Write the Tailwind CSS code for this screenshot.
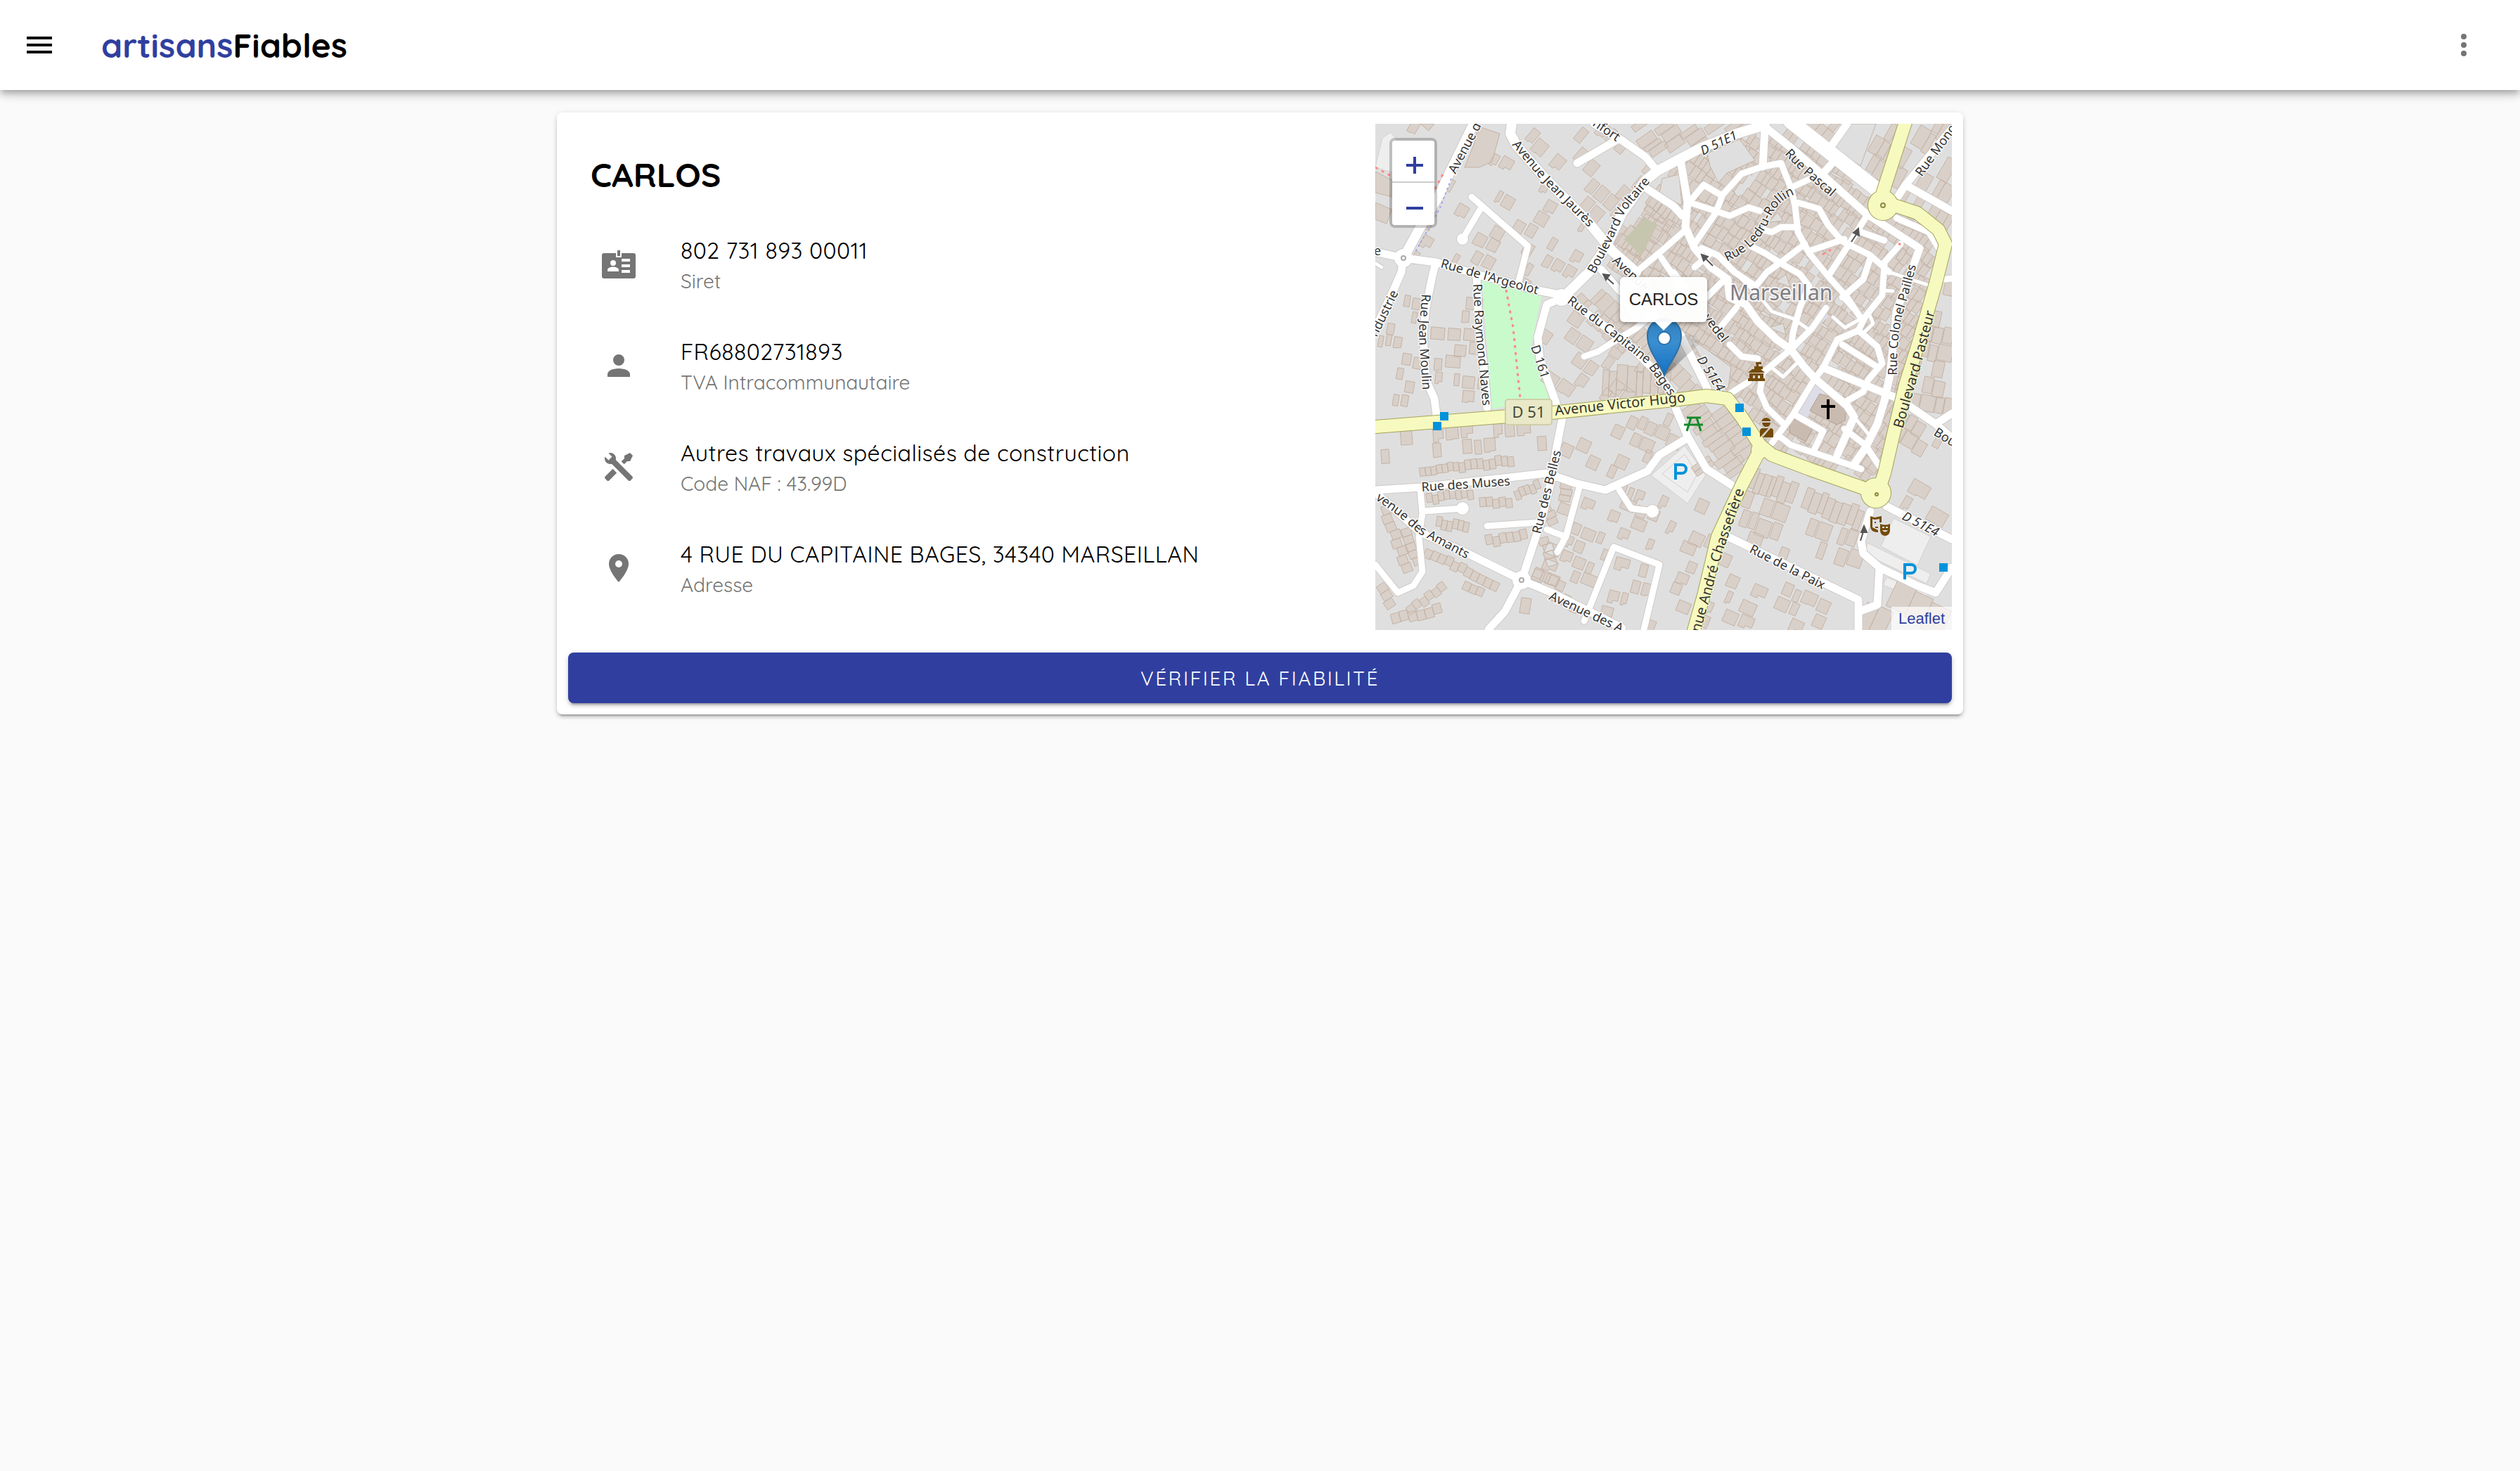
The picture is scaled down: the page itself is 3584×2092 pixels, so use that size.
<!DOCTYPE html>
<html lang="fr">
<head>
<meta charset="utf-8">
<meta name="viewport" content="width=device-width, initial-scale=1">
<title>artisansFiables - CARLOS</title>
<script src="https://cdn.jsdelivr.net/npm/@tailwindcss/browser@4"></script>
</head>
<body class="min-h-screen bg-[#fafafa] font-['Quicksand',Lato,sans-serif] text-black">

<header class="relative z-10 flex h-32 items-center bg-white pr-14 pl-8 shadow-[0_4px_8px_-2px_rgba(0,0,0,0.2),0_8px_10px_0_rgba(0,0,0,0.14),0_2px_20px_0_rgba(0,0,0,0.12)]">
  <button type="button" aria-label="Menu" class="size-12">
    <svg viewBox="0 0 24 24" class="size-12"><path d="M3 18h18v-2H3v2zm0-5h18v-2H3v2zm0-7v2h18V6H3z"/></svg>
  </button>
  <a href="#" class="ml-16 text-5xl font-bold"><span class="text-[#303f9f]">artisans</span>Fiables</a>
  <button type="button" aria-label="Plus d'options" class="ml-auto size-12 text-[#757575]">
    <svg viewBox="0 0 24 24" class="size-12" fill="currentColor"><circle cx="12" cy="6" r="2"/><circle cx="12" cy="12" r="2"/><circle cx="12" cy="18" r="2"/></svg>
  </button>
</header>

<main class="px-8 pt-8">
  <article class="mx-auto w-full max-w-[2000px] rounded-lg bg-white p-4 shadow-[0_6px_2px_-4px_rgba(0,0,0,0.2),0_4px_4px_0_rgba(0,0,0,0.14),0_2px_10px_0_rgba(0,0,0,0.12)]">
    <div class="grid grid-cols-12">
      <section class="col-span-7">
        <h1 class="flex h-32 items-center px-8 pt-4 text-5xl font-bold">CARLOS</h1>
        <ul class="text-[#757575]">
          <li class="flex h-36 items-center gap-16 px-12">
            <svg viewBox="0 0 24 24" class="size-12" fill="currentColor"><path fill-rule="evenodd" d="M11 2h2v4h-2zM1.500 4H10v3h4V4h8.500A1.500 1.500 0 0 1 24 5.500v15a1.500 1.500 0 0 1-1.500 1.500h-21A1.500 1.500 0 0 1 0 20.500v-15A1.500 1.500 0 0 1 1.500 4zM14 8v2h6V8zm0 4v2h6v-2zm0 4v2h6v-2zM8 9a2 2 0 1 0 0 4 2 2 0 0 0 0-4zm-4 8h8v-1c0-1.300-2-2.200-4-2.200s-4 .9-4 2.200z"/></svg>
            <div class="flex flex-col gap-1 pt-1"><p class="text-[32px] leading-10 tracking-[0.015em] text-black">802 731 893 00011</p><p class="text-[28px] leading-10">Siret</p></div>
          </li>
          <li class="flex h-36 items-center gap-16 px-12">
            <svg viewBox="0 0 24 24" class="size-12" fill="currentColor"><path d="M12 4a4 4 0 1 1 0 8 4 4 0 0 1 0-8m0 10c4.420 0 8 1.790 8 4v2H4v-2c0-2.210 3.580-4 8-4z"/></svg>
            <div class="flex flex-col gap-1 pt-1"><p class="text-[32px] leading-10 tracking-[0.015em] text-black">FR68802731893</p><p class="text-[28px] leading-10">TVA Intracommunautaire</p></div>
          </li>
          <li class="flex h-36 items-center gap-16 px-12">
            <svg viewBox="0 0 24 24" class="size-12" fill="currentColor"><path d="M21.710 20.290L20.290 21.710A1 1 0 0 1 18.880 21.710L7 9.850A3.810 3.810 0 0 1 6 10A4 4 0 0 1 2.220 4.700L4.760 7.240L5.290 6.710L6.710 5.290L7.240 4.760L4.700 2.220A4 4 0 0 1 10 6A3.810 3.810 0 0 1 9.850 7L21.710 18.880A1 1 0 0 1 21.710 20.290M2.290 18.880A1 1 0 0 0 2.290 20.290L3.710 21.710A1 1 0 0 0 5.120 21.710L10.590 16.250L7.760 13.420M20 2L16 4V6L13.830 8.170L15.830 10.170L18 8H20L22 4Z"/></svg>
            <div class="flex flex-col gap-1 pt-1"><p class="text-[32px] leading-10 tracking-[0.015em] text-black">Autres travaux spécialisés de construction</p><p class="text-[28px] leading-10">Code NAF : 43.99D</p></div>
          </li>
          <li class="flex h-36 items-center gap-16 px-12">
            <svg viewBox="0 0 24 24" class="size-12" fill="currentColor"><path d="M12 11.500A2.500 2.500 0 0 1 9.500 9 2.500 2.500 0 0 1 12 6.500 2.500 2.500 0 0 1 14.500 9 2.500 2.500 0 0 1 12 11.500M12 2a7 7 0 0 0-7 7c0 5.250 7 13 7 13s7-7.750 7-13a7 7 0 0 0-7-7z"/></svg>
            <div class="flex flex-col gap-1 pt-1"><p class="text-[32px] leading-10 tracking-[0.015em] text-black">4 RUE DU CAPITAINE BAGES, 34340 MARSEILLAN</p><p class="text-[28px] leading-10">Adresse</p></div>
          </li>
        </ul>
      </section>

      <section aria-label="Carte" class="relative col-span-5 h-[720px] overflow-hidden bg-[#e0dfdf] font-['Liberation_Sans',Arial,sans-serif]">
        <svg viewBox="0 0 820 720" preserveAspectRatio="xMidYMid slice" class="block h-full w-full" role="img" aria-label="Plan de Marseillan">
          <defs>
            <linearGradient id="pin" x1="0" y1="0" x2="0" y2="1"><stop offset="0" stop-color="#2e7cb8"/><stop offset=".4" stop-color="#3b8fd0"/><stop offset="1" stop-color="#1470c4"/></linearGradient>
            <linearGradient id="shade" x1="0" y1="1" x2="1" y2="0"><stop offset="0" stop-color="#000" stop-opacity=".6"/><stop offset="1" stop-color="#000" stop-opacity="0"/></linearGradient>
            <path id="l1" d="M194 30L236 80L312 156"/>
            <path id="l2" d="M312 214L332 176L356 124L396 76"/>
            <path id="l3" d="M92 204L144 219L246 247"/>
            <path id="l4" d="M139 228L143 300L154 414"/>
            <path id="l5" d="M66 242L62 300L68 390"/>
            <path id="l6" d="M272 254L328 296L386 342L432 408"/>
            <path id="l7" d="M582 43L606 68L664 118"/>
            <path id="l8" d="M500 196Q545 176 560 138T612 98"/>
            <path id="l9" d="M742 358Q741 300 752 264T774 182"/>
            <path id="l10" d="M750 434L773 354L802 245"/>
            <path id="l11" d="M0 534L32 557L62 583L136 622"/>
            <path id="l12" d="M462 724L493 612L534 495"/>
          </defs>
          <rect width="820" height="720" fill="#dfdfdf"/>
          <g fill="#eee" stroke="#d4d0ce">
            <path d="M10 20L22 12 40 34 26 70 0 62ZM0 68L24 80V100L0 96Z"/>
            <path d="M392 500L440 458 470 500 444 540Z"/><path d="M408 498L440 470 458 498 444 524Z"/>
            <path d="M737 561L790 587 771 628 719 601Z"/><path d="M700 596L790 640 784 654 696 612ZM727 645L786 668 782 680 722 656Z"/>
          </g>
          <path d="M151 221L237 241 231 271 222 317 237 361 247 391 166 406Z" fill="#c8facc"/>
          <g id="buildings" fill="#d9d0c9" stroke="#c4b3a6" stroke-width="1"></g>
          <path d="M384 134L401 144 384 177 377 187 354 164Z" fill="#c6c6ae"/>
          <g fill="#dddde8"><path d="M624 366L640 382 614 418 598 412ZM637 266L646 274 628 288Z"/></g>
          <path d="M632 384L652 390 670 402 668 422 656 428 618 408ZM588 424L600 420 622 434 612 452 590 440Z" fill="#c9bbb0" stroke="#b3a090"/>
          <g id="roads" fill="none" stroke-linecap="round" stroke-linejoin="round"></g>
          <g fill="none" stroke="#ff8a8a" stroke-width="3" stroke-dasharray="4 6"><path d="M186 236L196 290 206 390"/><path d="M96 72L84 94M0 62L22 74M230 0M636 186L650 178M744 170L750 174"/></g>
          <path d="M108 78L92 120 56 184" fill="none" stroke="#a5a5f5" stroke-width="2" stroke-dasharray="3 4"/>
          <g fill="none" stroke="#aaa" stroke-width="2"><circle cx="40" cy="191" r="3"/><circle cx="208" cy="649" r="3"/></g>
          <g fill="none" stroke="#8a8a40" stroke-width="2"><circle cx="722" cy="116" r="3"/><circle cx="713" cy="527" r="2"/></g>
          <g fill="#555" stroke="#555" stroke-width="2">
            <path d="M324 214L333 215 328 222ZM328 218L339 228"/><path d="M464 186L473 189 467 195ZM469 191L480 202"/>
            <path d="M687 149L688 159 680 155ZM685 156L677 168"/><path d="M695 572L699 581 691 581ZM694 580L690 593"/>
          </g>
          <g fill="#333" stroke="#fff" stroke-opacity=".75" stroke-width="3" paint-order="stroke" font-family="'Noto Sans',sans-serif" font-size="18">
            <text><textPath href="#l1">Avenue Jean Jaurès</textPath></text>
            <text><textPath href="#l2">Boulevard Voltaire</textPath></text>
            <text><textPath href="#l3">Rue de l'Argeolot</textPath></text>
            <text><textPath href="#l4">Rue Raymond Naves</textPath></text>
            <text><textPath href="#l5">Rue Jean Moulin</textPath></text>
            <text><textPath href="#l6">Rue du Capitaine Bages</textPath></text>
            <text><textPath href="#l7">Rue Pascal</textPath></text>
            <text><textPath href="#l8">Rue Ledru-Rollin</textPath></text>
            <text><textPath href="#l9">Rue Colonel Pailles</textPath></text>
            <text><textPath href="#l11">venue des Amants</textPath></text>
            <text transform="translate(114 72) rotate(-62)">Avenue d</text>
            <text transform="translate(308 2) rotate(34)">nfort</text>
            <text transform="translate(336 196) rotate(43)">Avenue</text>
            <text transform="translate(2 304) rotate(-64)">ndustrie</text>
            <text x="-2" y="187">e</text>
            <text transform="translate(221 317) rotate(72)">D 161</text>
            <text transform="translate(466 45) rotate(-26)" font-style="italic">D 51E1</text>
            <text transform="translate(777 76) rotate(-54)">Rue Mono</text>
            <text transform="translate(466 276) rotate(53)">vedel</text>
            <text transform="translate(457 335) rotate(57)" font-style="italic">D 51E4</text>
            <text transform="translate(793 442) rotate(32)">Boul</text>
            <text transform="translate(66 523) rotate(-4)">Rue des Muses</text>
            <text transform="translate(235 584) rotate(-76)">Rue des Belles</text>
            <text transform="translate(246 676) rotate(25)">Avenue des A</text>
            <text transform="translate(531 609) rotate(27)">Rue de la Paix</text>
            <text transform="translate(748 562) rotate(27)" font-style="italic">D 51E4</text>
            <g stroke="#f7fabf" font-size="20">
              <text><textPath href="#l10">Boulevard Pasteur</textPath></text>
              <text><textPath href="#l12">nue André Chassefière</textPath></text>
              <text transform="translate(256 415) rotate(-6)">Avenue Victor Hugo</text>
            </g>
            <text x="504" y="251" font-size="30" fill="#7d7d85" stroke-width="4">Marseillan</text>
          </g>
          <rect x="185" y="392" width="66" height="36" rx="4" fill="#e9e9c8" stroke="#cfcfa6" stroke-width="2"/>
          <text x="218" y="418" text-anchor="middle" font-family="'Noto Sans',sans-serif" font-size="22" fill="#4a4a35">D 51</text>
          <g fill="#0092da"><path d="M92 410h12v12H92zM82 424h12v12H82zM512 398h12v12h-12zM522 432h12v12h-12zM802 625h12v12h-12z"/></g>
          <g fill="none" stroke="#0092da" stroke-width="4"><path d="M427 506V485h9a6 6 0 0 1 0 12h-9M753 648V627h9a6 6 0 0 1 0 12h-9"/></g>
          <g fill="#734a08">
            <path d="M541 339h8v3h-4v3h6v4h-12v-4h3zM530 354l6-5h12l6 5zM532 355h20v7h2v4h-24v-4h2zM537 358v4h3v-4zM544 358v4h3v-4z" fill-rule="evenodd"/>
            <path d="M550 421q6-6 12 0v2h-12zM550 425h12q-1 6-6 6t-6-6zM547 446v-9q0-4 4-4h8zM566 446v-9q0-4-4-4l-11 13z"/>
            <path d="M704 558l6 2 10-2v9h-3v-5l-7 1-3-1v12l8 4v3q-11 0-11-9zM710 566h2v2h-2zM711 573h4v2h-4zM718 569q7 3 14 0v10q-1 7-7 7t-7-7zm3 4v2h3v-2zm5 0v2h3v-2zm-5 5q4 5 8 0z" fill-rule="evenodd"/>
          </g>
          <path d="M642 392h4v8h8v4h-8v16h-4v-16h-8v-4h8z" fill="#000"/>
          <path d="M443 418h20M439 428h27M449 418l-6 19M457 418l6 19" stroke="#168a2a" stroke-width="3" fill="none"/>
          <path d="M411 359L462 312Q458 294 436 302Z" fill="url(#shade)" opacity=".7"/>
          <path d="M411 358C405 340 387 324 387 301a24 24 0 0 1 48 0C435 324 417 340 411 358Z" fill="url(#pin)" stroke="#2b6fa5" stroke-width="2"/>
          <circle cx="411" cy="305" r="9" fill="#fff" stroke="#2b73ad" stroke-width="2"/>
        </svg>

        <div class="absolute top-5 left-5 flex flex-col rounded-lg border-4 border-black/20 bg-clip-padding">
          <button type="button" aria-label="Zoom avant" class="grid h-[60px] w-15 place-items-center rounded-t-sm border-b-2 border-[#ccc] bg-white"><svg viewBox="0 0 24 24" class="mt-3 ml-1 size-6"><path d="M0 12h24M12 0v24" stroke="#303f9f" stroke-width="4"/></svg></button>
          <button type="button" aria-label="Zoom arrière" class="grid h-[60px] w-15 place-items-center rounded-b-sm bg-white"><svg viewBox="0 0 24 24" class="mt-3 ml-1 size-6"><path d="M0 12h24" stroke="#303f9f" stroke-width="4"/></svg></button>
        </div>
        <div role="tooltip" class="absolute top-[218px] left-1/2 flex h-16 w-[124px] -translate-x-1/2 items-center justify-center rounded-md bg-white/95 text-2xl text-[#222] shadow-[0_2px_6px_rgba(0,0,0,0.4)]">CARLOS
          <svg viewBox="0 0 24 12" class="absolute top-full h-3 w-6"><path d="M0 0h24L12 12z" fill="#fff"/></svg>
        </div>
        <div class="absolute right-0 bottom-0 bg-white/70 px-[10px] text-[22px] leading-[33px]"><a href="#" class="text-[#303f9f]">Leaflet</a></div>
      </section>
    </div>
    <button type="button" class="mt-8 h-18 w-full rounded-lg bg-[#303f9f] pt-0.5 text-[28px] tracking-[0.09em] text-white shadow-[0_6px_2px_-4px_rgba(0,0,0,0.2),0_4px_4px_0_rgba(0,0,0,0.14),0_2px_10px_0_rgba(0,0,0,0.12)]">VÉRIFIER LA FIABILITÉ</button>
  </article>
</main>

<script>
// Small seeded generator so that the plan is the same on every load.
let seed = 7;
const rnd = () => (seed = (seed * 16807) % 2147483647) / 2147483647;
const buildings = document.getElementById('buildings');
const roads = document.getElementById('roads');

function inside(x, y, p) {
  let c = false;
  for (let i = 0, j = p.length - 1; i < p.length; j = i++) {
    if ((p[i][1] > y) !== (p[j][1] > y) && x < (p[j][0] - p[i][0]) * (y - p[i][1]) / (p[j][1] - p[i][1]) + p[i][0]) c = !c;
  }
  return c;
}
const points = s => s.split(' ').map(q => q.split(',').map(Number));
let shapes = '';

// Party-wall blocks: [outline, angle, plot width, plot depth, share built, gap]
const blocks = [
  ['400,95 424,60 470,42 554,12 600,14 712,105 780,150 800,170 780,260 745,400 722,495 690,505 560,458 512,385 420,300 330,190', 34, 10, 17, .95, 0],
  ['0,0 190,0 194,28 300,140 300,205 265,240 40,185 130,20', 30, 17, 22, .27, 4],
  ['200,0 310,0 400,65 384,80 340,165 300,130', 40, 17, 24, .45, 3],
  ['340,0 554,0 404,56', 55, 12, 28, .8, 1],
  ['345,150 384,90 430,120 437,150 371,205 330,170', 35, 16, 30, .85, 0],
  ['590,0 660,0 640,30', 40, 12, 20, .85, 0],
  ['712,20 740,0 730,90 690,70', 30, 14, 26, .8, 0],
  ['760,0 820,0 760,70 735,80', 30, 14, 30, .8, 0],
  ['740,110 820,50 820,150 800,140', 30, 12, 34, .8, 0],
  ['800,240 820,220 820,430 745,380', 12, 16, 24, .75, 1],
  ['735,440 750,400 820,440 820,470 740,460', 30, 16, 22, .8, 1],
  ['85,205 140,218 155,400 88,400', 5, 20, 22, .55, 5],
  ['0,300 60,230 70,400 0,410', 10, 17, 20, .55, 4],
  ['245,260 300,262 420,372 420,390 258,395 236,320', 35, 18, 22, .4, 3],
  ['280,250 316,212 470,382 430,386', 45, 12, 24, .93, 0],
  ['324,352 420,346 424,384 322,392', 3, 11, 36, .93, 0],
  ['0,440 250,425 250,470 0,495', -4, 22, 24, .45, 4],
  ['270,418 424,402 440,445 380,485 330,505 255,490', 25, 18, 20, .5, 2],
  ['436,404 505,402 538,465 505,512 468,485', 55, 12, 30, .93, 0],
  ['540,480 700,535 690,570 530,510', 20, 10, 30, .95, 0],
  ['515,520 690,580 680,660 500,580', 20, 17, 26, .45, 2],
  ['470,545 395,520 390,600 480,600', 25, 18, 22, .55, 3],
  ['400,590 480,600 445,720 390,720', 22, 18, 20, .45, 4],
  ['490,600 680,685 680,720 462,720', 24, 19, 22, .45, 4],
  ['740,480 820,500 820,575 725,530', 30, 22, 24, .3, 3],
  ['700,690 730,660 820,690 820,720 700,720', 25, 24, 40, .9, 0],
  ['275,515 400,520 400,615 340,595 280,700 225,640', 22, 18, 20, .5, 4],
  ['310,700 340,615 398,635 375,720', 15, 18, 22, .5, 4],
];
for (const [outline, angle, w, d, share, gap] of blocks) {
  const p = points(outline), a = angle * Math.PI / 180, ca = Math.cos(a), sa = Math.sin(a);
  const xs = p.map(q => q[0]), ys = p.map(q => q[1]);
  const cx = (Math.min(...xs) + Math.max(...xs)) / 2, cy = (Math.min(...ys) + Math.max(...ys)) / 2;
  const r = Math.hypot(Math.max(...xs) - cx, Math.max(...ys) - cy);
  const to = (u, v) => [cx + u * ca - v * sa, cy + u * sa + v * ca];
  for (let v = -r; v < r; v += d) {
    let shift = rnd() * w;
    for (let u = -r; u < r;) {
      const ww = w * (.6 + rnd() * .8), keep = rnd() < share, dv = (rnd() - .5) * d * .3, dh = rnd() * d * .25;
      const m = to(u + shift + ww / 2, v + d / 2);
      if (keep && inside(m[0], m[1], p)) {
        const L = u + shift + gap / 2, R = L + ww - gap, T = v + gap / 2 + dv, B = v + d - gap / 2 + dv;
        const quad = gap > 2 && rnd() < .5
          ? [[L, T], [R, T], [R, B - dh], [(L + R) / 2, B - dh], [(L + R) / 2, B], [L, B]]
          : [[L, T], [R, T], [R, B], [L, B]];
        shapes += 'M' + quad.map(q => to(...q).map(n => n.toFixed(1)).join(' ')).join('L') + 'Z';
      }
      u += ww;
    }
  }
}
// Terraces: [x1, y1, x2, y2, depth, houses]
const terraces = [
  [62, 488, 118, 480, 12, 7], [118, 482, 196, 472, 14, 9], [72, 528, 138, 518, 13, 8], [148, 534, 194, 530, 13, 5],
  [196, 522, 232, 508, 13, 5], [88, 560, 134, 568, 14, 6], [156, 588, 214, 576, 14, 6], [74, 602, 178, 652, 13, 11],
  [6, 546, 40, 640, -14, 8], [36, 578, 54, 630, -14, 5], [22, 700, 92, 682, 14, 6], [44, 690, 96, 652, 12, 6],
  [128, 650, 156, 662, 12, 3], [266, 510, 262, 536, -16, 3], [250, 540, 262, 566, 14, 3], [234, 590, 246, 630, -14, 4],
  [228, 632, 272, 652, 14, 4], [208, 674, 222, 676, 22, 1], [0, 660, 20, 690, -14, 3],
];
for (const [x1, y1, x2, y2, d, n] of terraces) {
  const dx = (x2 - x1) / n, dy = (y2 - y1) / n, l = Math.hypot(dx, dy), nx = -dy / l, ny = dx / l;
  for (let i = 0; i < n; i++) {
    const o = (rnd() - .5) * 6, ax = x1 + dx * i + nx * o, ay = y1 + dy * i + ny * o;
    shapes += 'M' + [[ax, ay], [ax + dx, ay + dy], [ax + dx + nx * d, ay + dy + ny * d], [ax + nx * d, ay + ny * d]]
      .map(q => q.map(z => z.toFixed(1)).join(' ')).join('L') + 'Z';
  }
}
shapes += 'M147 4L177 14 166 54 148 62 127 62 140 30ZM64 0L84 0 76 10ZM0 68L24 80 24 104 0 98ZM0 112L24 122 16 142 0 136Z';
const courts = 'M472 42L518 22 540 52 500 70 488 84 476 60ZM404 100L436 116 432 72 408 78ZM448 306L486 372 502 376 506 346 470 320ZM570 225L584 214 590 232ZM672 0L712 0 690 60 652 34ZM560 140L572 126 580 138ZM514 246L530 240 540 256ZM560 290L580 284 584 300ZM745 130L796 152 790 160 742 142Z';
buildings.innerHTML = `<path d="${shapes}"/><path d="${courts}" fill="#dfdfdf"/>`;

// Streets grouped by width.
const streets = {
  22: ['590,-4 714,94'],
  15: ['140,0 107,67 91,101 64,147 40,191', '267,247 304,211 327,177 351,127 384,81 401,67 431,51 464,34 514,14 554,2', '194,0 192,14 201,31 241,77 304,141 337,181 371,211'],
  12: ['0,182 40,191 37,211 24,241 0,291', '40,191 87,197 144,214 231,237 267,244', '86,197 81,217 72,261 68,300 72,364 84,391 87,414',
    '144,217 147,284 156,361 159,404', '311,0 347,21 384,47 401,67', '347,21 287,56', '384,91 424,117 437,131',
    '267,247 244,257 231,304 234,334 257,397', '267,244 284,257 334,294 367,321 401,354 424,384 427,404 444,444 471,491 507,514',
    '321,207 347,237 390,270 434,300 472,376', '554,4 591,34 634,71 697,127 774,177 767,197 757,224 741,267 737,311 732,357 724,394 714,427 697,461 681,484',
    '554,7 551,61', '671,0 647,34', '654,51 634,74', '434,51 444,111 441,147 454,177 477,204 501,221 504,247 527,257 544,281 571,307 591,321 611,347 627,364 651,384 671,401 681,417 657,471',
    '820,7 754,87 741,107', '754,87 820,124', '727,544 820,591', '501,587 687,677 687,720', '704,551 691,594 694,611 717,631 771,657 797,667 820,631', '717,631 714,684 687,694',
    '0,521 64,517 244,497 284,511 327,521 387,494 404,471 444,447', '267,414 257,464 251,504 237,561 214,631 208,649 184,694 161,719',
    '0,524 64,581 131,611 208,649 251,667 351,717', '744,391 797,427 820,412', '797,427 820,447', '637,347 671,361 744,391'],
  10: ['137,104 217,174 204,224', '152,117 124,164', '297,331 317,324 337,311 371,291 417,251 471,247 494,224', '371,211 407,181 441,151', '407,191 440,240',
    '447,111 467,87 491,101', '444,111 484,124 504,131 531,119 547,124', '454,171 484,127 494,101 521,71 551,61 577,56 591,91 597,117 601,154 617,184 644,217 671,247 691,277',
    '591,91 634,71', '551,151 564,154 577,147 601,147', '464,177 487,187 511,211 541,231 557,211 577,197 611,171', '534,174 554,184 581,201 604,214 617,231 604,261 594,297 591,321',
    '597,111 631,121 644,144 664,167 704,187 731,211', '617,181 667,164', '697,134 674,171 644,217', '691,154 724,166', '724,197 747,171', '704,191 694,221 664,247',
    '724,201 721,244 697,274 687,294 657,307 637,347 624,364 594,414 564,454', '641,262 621,291 591,321 551,354 547,381 557,404 581,427', '687,294 714,317 721,341 701,364 694,381 671,394',
    '664,314 711,344', '597,414 637,437 624,464', '574,444 591,457 651,477 691,491', '667,434 697,457 717,487', '504,314 521,331 544,334', '531,367 504,384', '514,261 487,294', '454,204 477,184', '741,134 787,154 801,177',
    '64,521 67,554 62,587 67,637 54,657 32,667 0,627', '67,551 124,547', '159,572 231,567', '244,577 267,586', '291,514 271,587 259,609', '347,521 364,547 394,551', '297,707 339,602 404,627 382,719', '424,211 440,232', '800,222 820,220'],
  6: ['551,251 564,267 594,277 614,291', '731,211 791,231', '681,417 701,441', '687,294 702,270 708,284 694,298', '664,247 691,277', '651,275 668,290 691,277', '564,347 580,360 600,340', '1,199 9,204', '511,211 541,240', '721,237 736,238'],
};
const avenues = ['0,431 251,411 424,393 471,387 501,391 521,417 547,457 564,471 617,491 691,517 714,527 724,497 737,441 754,371 771,317 797,227 811,171 801,151 771,127 741,117 722,116 722,97 754,-2', '547,464 521,514 487,587 467,671 452,724'];
const circles = [[40, 191, 13], [208, 649, 13], [124, 164, 8], [124, 547, 9], [394, 551, 9], [265, 247, 12]];
const hubs = [[722, 116, 21], [712, 525, 21], [547, 464, 12]];
const line = s => 'M' + s.replace(/ /g, 'L');
const draw = (d, colour, w) => `<path d="${d}" stroke="${colour}" stroke-width="${w}"/>`;
const disc = (list, colour, extra) => list.map(([x, y, r]) => `<circle cx="${x}" cy="${y}" r="${r + extra}" fill="${colour}"/>`).join('');
let out = '';
for (const w in streets) out += draw(streets[w].map(line).join(''), '#cfcac7', +w + 1);
out += disc(circles, '#cfcac7', 1);
for (const w in streets) out += draw(streets[w].map(line).join(''), '#fff', w - 1);
out += disc(circles, '#fff', 0);
out += draw(avenues.map(line).join(''), '#a3a35c', 20) + disc(hubs, '#a3a35c', 1);
out += draw(avenues.map(line).join(''), '#f7fabf', 18) + disc(hubs, '#f7fabf', 0);
roads.innerHTML = out;
</script>
</body>
</html>
